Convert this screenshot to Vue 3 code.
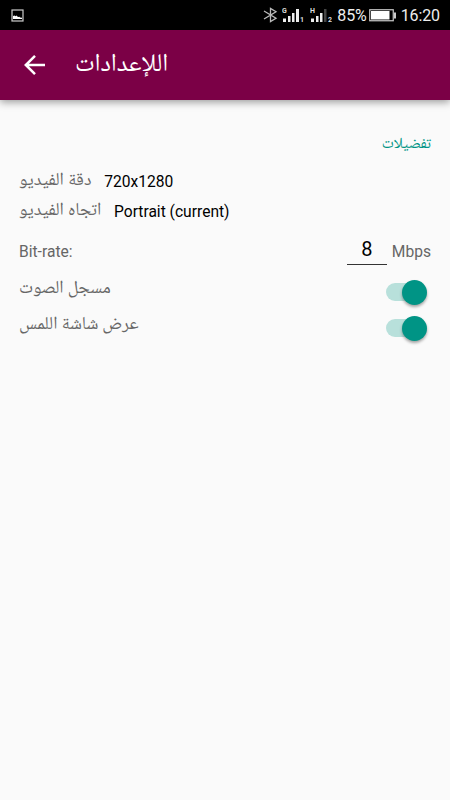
<script setup>
import { ref } from 'vue'

const resolution = ref('720x1280')
const orientation = ref('Portrait (current)')
const bitrate = ref(8)
const recordAudio = ref(true)
const showTouches = ref(true)
</script>

<template>
  <div class="screen">
    <div class="status-bar">
      <svg class="picture-icon" width="13" height="13" viewBox="0 0 13 13">
        <rect x="1" y="1" width="11" height="11" fill="none" stroke="#ccc" stroke-width="1.2" />
        <path d="M2 10V7l1.5-.5 1 .7 1-.7L7 8l1.5-.3L9 8.500l2 .2V10z" fill="#fff" />
      </svg>
      <div class="status-right">
        <svg class="bluetooth" width="15" height="16" viewBox="0 0 15 16">
          <path d="M1 4L13 11.200 7.500 14.500V1.500L13 4.800 1 12" fill="none" stroke="#bbb" stroke-width="1.3" />
        </svg>
        <svg class="signal" width="22" height="16" viewBox="0 0 22 16">
          <text x="0" y="6" class="net">G</text>
          <path d="M1 11.500h3V15H1zM6 9h2.500v6H6zM10 6h2.500v9H10zM14 2h3v13h-3z" fill="#eee" />
          <text x="18" y="14.500" class="sim">1</text>
        </svg>
        <svg class="signal second" width="22" height="16" viewBox="0 0 22 16">
          <text x="0" y="6" class="net">H</text>
          <path d="M1 11.500h3V15H1zM6 9h2.500v6H6zM10 6h2.500v9H10z" fill="#eee" />
          <path d="M14 2h2.500v13H14z" fill="#444" />
          <text x="18" y="14.500" class="sim">2</text>
        </svg>
        <span class="percent">85%</span>
        <svg class="battery" width="27" height="13" viewBox="0 0 27 13">
          <rect x=".75" y=".75" width="23.5" height="11" fill="none" stroke="#ccc" stroke-width="1.2" />
          <rect x="2" y="2" width="18.5" height="8.5" fill="#fff" />
          <path d="M25 3.500h2v6h-2z" fill="#ccc" />
        </svg>
        <span class="clock">16:20</span>
      </div>
    </div>

    <div class="toolbar">
      <svg class="back" width="22" height="22" viewBox="0 0 22 22">
        <path d="M21 11H2.500M11 1.800L1.800 11l9.200 9.200" fill="none" stroke="#fff" stroke-width="2.5" />
      </svg>
      <h1 class="title" dir="rtl">اللإعدادات</h1>
    </div>

    <div class="content">
      <div class="category" dir="rtl">تفضيلات</div>

      <div class="row resolution">
        <span class="label" dir="rtl">دقة الفيديو</span>
        <span class="value">{{ resolution }}</span>
      </div>
      <div class="row orientation">
        <span class="label" dir="rtl">اتجاه الفيديو</span>
        <span class="value">{{ orientation }}</span>
      </div>
      <div class="row bitrate">
        <span class="latin">Bit-rate:</span>
        <span class="number">{{ bitrate }}</span>
        <span class="latin unit">Mbps</span>
      </div>
      <div class="row toggle">
        <span class="label" dir="rtl">مسجل الصوت</span>
        <button class="switch" :class="{ on: recordAudio }" @click="recordAudio = !recordAudio"><i></i></button>
      </div>
      <div class="row toggle">
        <span class="label" dir="rtl">عرض شاشة اللمس</span>
        <button class="switch" :class="{ on: showTouches }" @click="showTouches = !showTouches"><i></i></button>
      </div>
    </div>
  </div>
</template>

<style>
body {
  margin: 0;
  background: #fafafa;
}
</style>

<style scoped>
.screen {
  width: 450px;
  height: 800px;
  overflow: hidden;
  background: #fafafa;
  font-family: Roboto, "Noto Naskh Arabic UI", "Noto Naskh Arabic", "DejaVu Sans", sans-serif;
}

.title,
.category,
.label {
  font-family: "Noto Naskh Arabic UI", "Noto Naskh Arabic", "DejaVu Sans", sans-serif;
}

.status-bar {
  display: flex;
  align-items: center;
  justify-content: space-between;
  height: 30px;
  box-sizing: border-box;
  padding: 0 10px 0 11px;
  background: #000;
  color: #eee;
}

.status-right {
  display: flex;
  align-items: center;
  font-size: 16px;
  line-height: 30px;
}

.bluetooth {
  margin-right: 4px;
}

.signal.second {
  margin-left: 6px;
}

.net {
  font-size: 7px;
  font-weight: 700;
  fill: #ddd;
}

.sim {
  font-size: 7px;
  font-weight: 700;
  fill: #ddd;
}

.percent {
  margin-left: 5px;
  padding-top: 2px;
  letter-spacing: -.1px;
}

.battery {
  margin-left: 2px;
}

.clock {
  margin-left: 5px;
  padding-top: 2px;
  letter-spacing: -.1px;
}

.toolbar {
  display: flex;
  align-items: center;
  height: 70px;
  box-sizing: border-box;
  padding-left: 24px;
  background: #7b0046;
  box-shadow: 0 2px 8px rgba(0, 0, 0, .4);
}

.title {
  margin: 0 0 2px 29px;
  color: #fff;
  font-size: 25.2px;
  font-weight: 400;
  line-height: 40px;
}

.content {
  padding: 32px 19px 0 19px;
}

.category {
  height: 24px;
  color: #009485;
  font-size: 15.5px;
  line-height: 24px;
}

.row {
  display: flex;
  align-items: center;
  white-space: nowrap;
}

.label {
  padding-bottom: 4px;
  color: #666;
  font-size: 18.1px;
  line-height: 26px;
}

.value {
  margin-left: 12.8px;
  color: #000;
  font-size: 15.6px;
  line-height: 30px;
}

.resolution {
  height: 30px;
  margin-top: 11px;
}

.orientation {
  height: 30px;
}

.latin {
  padding-top: 5px;
  color: #666;
  font-size: 15.6px;
}

.bitrate {
  height: 38px;
  margin-top: 3px;
}

.number {
  width: 40px;
  height: 30px;
  margin-left: auto;
  border-bottom: 1px solid #333;
  color: #000;
  font-size: 20px;
  line-height: 30px;
  text-align: center;
}

.unit {
  margin-left: 5px;
}

.toggle {
  justify-content: space-between;
  height: 36px;
}

.toggle .label {
  padding-bottom: 9px;
}

.bitrate + .toggle {
  margin-top: 6px;
}

.switch {
  display: flex;
  align-items: center;
  width: 36px;
  height: 18px;
  margin-right: 9px;
  padding: 0;
  border: 0;
  border-radius: 9px;
  background: #bbb;
}

.switch i {
  width: 25px;
  height: 25px;
  flex: none;
  border-radius: 50%;
  background: #eee;
  box-shadow: 0 2px 3px rgba(0, 0, 0, .35);
}

.switch.on {
  background: #b8e0db;
}

.switch.on i {
  margin-left: 16px;
  background: #009485;
}
</style>
